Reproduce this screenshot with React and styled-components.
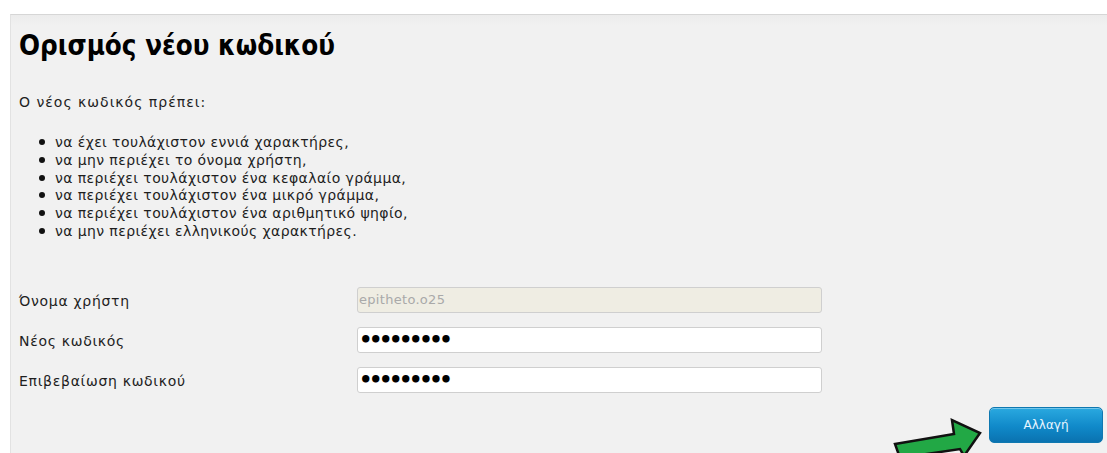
import React from "react";
import styled, { createGlobalStyle } from "styled-components";

const Global = createGlobalStyle`
  html, body { margin: 0; padding: 0; background: #ffffff; }
  body { overflow: hidden; }
`;

const Page = styled.div`
  width: 1107px;
  height: 453px;
  padding: 14px 0 0 10px;
  box-sizing: border-box;
  position: relative;
  overflow: hidden;
`;

const Panel = styled.section`
  height: 100%;
  box-sizing: border-box;
  background: linear-gradient(#ececec 0, #f1f1f1 10px, #f1f1f1 100%);
  border-top: 1px solid #d6d6d6;
  border-left: 1px solid #e2e2e2;
  padding: 12px 0 0 8px;
  font-family: "DejaVu Sans", sans-serif;
  color: #1e1e1e;
`;

const Title = styled.h1`
  margin: 0;
  font-family: "DejaVu Sans Condensed", "DejaVu Sans", sans-serif;
  font-weight: bold;
  font-size: 27.5px;
  line-height: 36px;
  color: #000;
`;

const Body = styled.div`
  font-size: 14px;
  letter-spacing: 0.4px;
`;

const Intro = styled.p`
  margin: 30px 0 0;
  line-height: 18px;
  letter-spacing: 1px;
`;

const Rules = styled.ul`
  margin: 23px 0 0;
  padding-left: 36px;
  list-style: none;
  line-height: 17.8px;
`;

const Rule = styled.li`
  &::before {
    content: "";
    display: inline-block;
    width: 6px;
    height: 6px;
    border-radius: 50%;
    background: #111;
    margin-left: -16px;
    margin-right: 10px;
    vertical-align: 2px;
  }
`;

const Form = styled.div`
  margin-top: 46px;
  display: grid;
  grid-template-columns: 338px 465px;
  row-gap: 14px;
  align-items: center;
`;

const Label = styled.label`
  line-height: 18px;
  padding-top: 2px;
  letter-spacing: 0.7px;
`;

const Field = styled.input`
  box-sizing: border-box;
  width: 465px;
  height: 26px;
  border: 1px solid #cfcfcf;
  border-radius: 3px;
  background: ${(p) => (p.disabled ? "#efede3" : "#ffffff")};
  color: ${(p) => (p.disabled ? "#a9a9a9" : "#000")};
  font-family: "DejaVu Sans", sans-serif;
  font-size: ${(p) => (p.type === "password" ? "21px" : "13px")};
  font-weight: ${(p) => (p.type === "password" ? "bold" : "normal")};
  padding: 0 1px;
  letter-spacing: ${(p) => (p.type === "password" ? "-3.4px" : "0.3px")};
  outline: none;
`;

const Actions = styled.div`
  margin-top: 14px;
  display: flex;
  justify-content: flex-end;
  padding-right: 4px;
`;

const Button = styled.button`
  width: 114px;
  height: 36px;
  border: 1px solid #0f78b0;
  border-radius: 5px;
  background: linear-gradient(#2aa9e0, #1089c9 55%, #0a72b0);
  color: #e8f6ff;
  font-family: "DejaVu Sans", sans-serif;
  font-size: 12px;
  box-shadow: inset 0 1px 0 rgba(255, 255, 255, 0.35);
  cursor: pointer;
`;

const Pointer = styled.svg`
  position: absolute;
  left: 892px;
  top: 416px;
`;

const rules = [
  "να έχει τουλάχιστον εννιά χαρακτήρες,",
  "να μην περιέχει το όνομα χρήστη,",
  "να περιέχει τουλάχιστον ένα κεφαλαίο γράμμα,",
  "να περιέχει τουλάχιστον ένα μικρό γράμμα,",
  "να περιέχει τουλάχιστον ένα αριθμητικό ψηφίο,",
  "να μην περιέχει ελληνικούς χαρακτήρες.",
];

export default function App() {
  return (
    <Page>
      <Global />
      <Panel>
        <Title>Ορισμός νέου κωδικού</Title>
        <Body>
          <Intro>Ο νέος κωδικός πρέπει:</Intro>
          <Rules>
            {rules.map((r) => (
              <Rule key={r}>{r}</Rule>
            ))}
          </Rules>
          <Form>
            <Label>Όνομα χρήστη</Label>
            <Field disabled defaultValue="epitheto.o25" />
            <Label>Νέος κωδικός</Label>
            <Field type="password" defaultValue="123456789" />
            <Label>Επιβεβαίωση κωδικού</Label>
            <Field type="password" defaultValue="123456789" />
          </Form>
        </Body>
        <Actions>
          <Button>Αλλαγή</Button>
        </Actions>
      </Panel>
      <Pointer width="92" height="40" viewBox="0 0 92 40">
        <path
          d="M3 28 L62 18 L60 4 L88 17 L72 40 L68 33 L8 42 Z"
          fill="#22a845"
          stroke="#111"
          strokeWidth="2.5"
          strokeLinejoin="miter"
        />
      </Pointer>
    </Page>
  );
}
